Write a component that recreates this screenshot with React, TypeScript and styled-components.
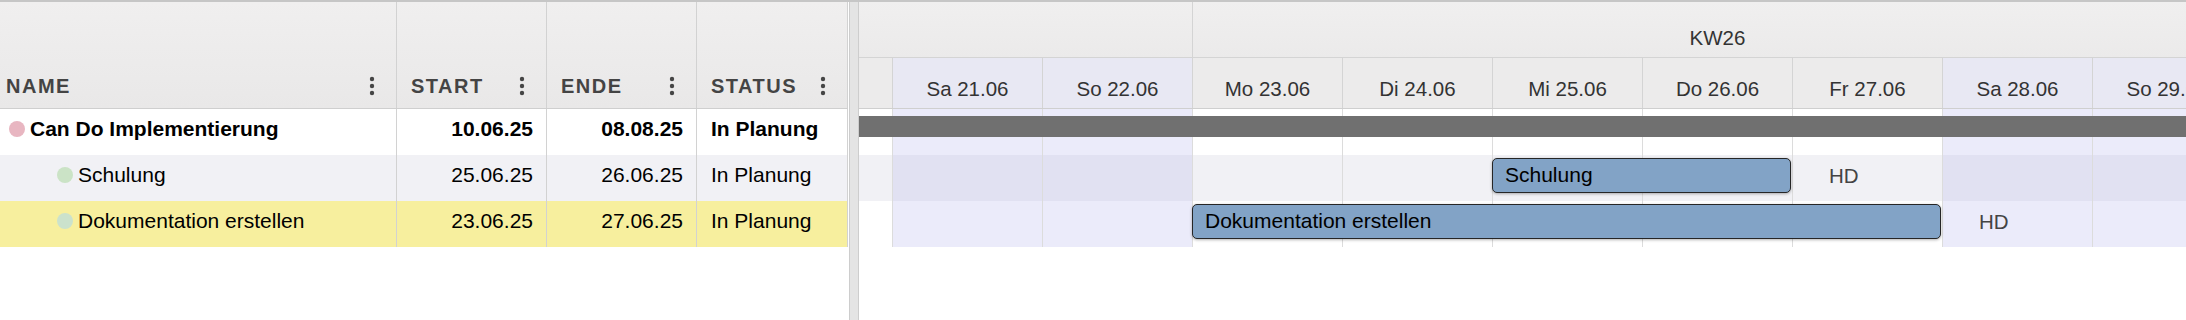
import styled, { createGlobalStyle } from "styled-components";

const DAY_WIDTH = 150;
const TIMELINE_START = new Date(2025, 5, 16);
const DAY_COUNT = 15;
const WEEKDAYS = ["So", "Mo", "Di", "Mi", "Do", "Fr", "Sa"];

type Task = {
  name: string;
  start: string;
  end: string;
  status: string;
  level: number;
  summary?: boolean;
  dot: string;
  tableBg: string;
  ganttBg: string;
};

const tasks: Task[] = [
  {
    name: "Can Do Implementierung",
    start: "10.06.25",
    end: "08.08.25",
    status: "In Planung",
    level: 0,
    summary: true,
    dot: "#e8b6c1",
    tableBg: "#ffffff",
    ganttBg: "#ffffff",
  },
  {
    name: "Schulung",
    start: "25.06.25",
    end: "26.06.25",
    status: "In Planung",
    level: 1,
    dot: "#cbe3c6",
    tableBg: "#f1f1f5",
    ganttBg: "#f1f1f5",
  },
  {
    name: "Dokumentation erstellen",
    start: "23.06.25",
    end: "27.06.25",
    status: "In Planung",
    level: 1,
    dot: "#cbe2cc",
    tableBg: "#f7ef9e",
    ganttBg: "#ffffff",
  },
];

const weeks = [
  { label: "KW25", days: 7 },
  { label: "KW26", days: 7 },
  { label: "KW27", days: 1 },
];

function toIndex(value: string) {
  const [dd, mm, yy] = value.split(".").map(Number);
  const date = new Date(2000 + yy, mm - 1, dd);
  return Math.round((date.getTime() - TIMELINE_START.getTime()) / 86400000);
}

const days = Array.from({ length: DAY_COUNT }, (_, i) => {
  const d = new Date(TIMELINE_START.getTime() + i * 86400000);
  const dd = String(d.getDate()).padStart(2, "0");
  const mm = String(d.getMonth() + 1).padStart(2, "0");
  return {
    label: `${WEEKDAYS[d.getDay()]} ${dd}.${mm}`,
    weekend: d.getDay() === 0 || d.getDay() === 6,
  };
});

const GlobalStyle = createGlobalStyle`
  body {
    margin: 0;
    background: #fff;
    font-family: "Liberation Sans", Arial, sans-serif;
    color: #111;
  }
`;

const Frame = styled.div`
  display: flex;
  height: 320px;
  border-top: 2px solid #c6c6c6;
  box-sizing: border-box;
  overflow: hidden;
`;

const TablePanel = styled.div`
  width: 848px;
  flex-shrink: 0;
  margin-right: 1px;
`;

const COLUMNS = "397px 150px 150px 151px";

const HeaderRow = styled.div`
  display: grid;
  grid-template-columns: ${COLUMNS};
  height: 107px;
  box-sizing: border-box;
  border-bottom: 1px solid #cfcfcf;
  background: linear-gradient(#f0efef, #e9e8e8);
`;

const HeaderCell = styled.div<{ $pad: number }>`
  display: flex;
  align-items: flex-end;
  justify-content: space-between;
  padding: 0 21px 10px ${(p) => p.$pad}px;
  border-right: 1px solid #d2d2d2;
  font-weight: 700;
  font-size: 20px;
  letter-spacing: 1.5px;
  color: #444;
`;

const MenuDots = styled.svg`
  width: 6px;
  height: 20px;
  margin-bottom: 2px;
  fill: #454545;
`;

const Row = styled.div<{ $bg: string; $bold: boolean }>`
  display: grid;
  grid-template-columns: ${COLUMNS};
  height: 46px;
  background: ${(p) => p.$bg};
  font-size: 21px;
  font-weight: ${(p) => (p.$bold ? 700 : 400)};
  color: #000;
`;

const Cell = styled.div<{ $align?: "left" | "right" }>`
  display: flex;
  align-items: center;
  justify-content: ${(p) => (p.$align === "right" ? "flex-end" : "flex-start")};
  padding: 0 13px 7px 14px;
  border-right: 1px solid #d2d2d2;
  white-space: nowrap;
`;

const NameCell = styled(Cell)<{ $level: number }>`
  padding-left: ${(p) => 9 + p.$level * 48}px;
  gap: 5px;
`;

const StatusDot = styled.span<{ $color: string }>`
  width: 16px;
  height: 16px;
  border-radius: 50%;
  background: ${(p) => p.$color};
  flex-shrink: 0;
`;

const Splitter = styled.div`
  width: 10px;
  flex-shrink: 0;
  box-sizing: border-box;
  background: #e4e4e4;
  border-left: 1px solid #cdcdcd;
  border-right: 1px solid #cdcdcd;
`;

const GanttPanel = styled.div`
  flex: 1;
  overflow: hidden;
`;

const Timeline = styled.div`
  width: ${DAY_COUNT * DAY_WIDTH}px;
  margin-left: -717px;
`;

const WeekTier = styled.div`
  display: flex;
  height: 56px;
  box-sizing: border-box;
  border-bottom: 1px solid #d4d4d4;
  background: linear-gradient(#f0efef, #ebeaea);
`;

const WeekCell = styled.div<{ $days: number }>`
  width: ${(p) => p.$days * DAY_WIDTH}px;
  flex-shrink: 0;
  box-sizing: border-box;
  border-left: 1px solid #d4d4d4;
  text-align: center;
  padding-top: 24px;
  font-size: 20.5px;
  color: #333;
`;

const DayTier = styled.div`
  display: flex;
  height: 51px;
  box-sizing: border-box;
  border-bottom: 1px solid #cfcfcf;
  background: #ecebeb;
`;

const DayCell = styled.div<{ $weekend: boolean }>`
  width: ${DAY_WIDTH}px;
  flex-shrink: 0;
  box-sizing: border-box;
  border-left: 1px solid #d4d4d4;
  background: ${(p) => (p.$weekend ? "#e8e8f3" : "transparent")};
  text-align: center;
  padding-top: 19px;
  font-size: 20.5px;
  color: #333;
`;

const GanttRow = styled.div<{ $bg: string }>`
  position: relative;
  display: flex;
  height: 46px;
  background: ${(p) => p.$bg};
`;

const DaySlot = styled.div<{ $weekend: boolean }>`
  width: ${DAY_WIDTH}px;
  flex-shrink: 0;
  box-sizing: border-box;
  border-left: 1px solid #dcdcdc;
  background: ${(p) => (p.$weekend ? "rgba(180, 180, 235, 0.27)" : "transparent")};
`;

const SummaryBar = styled.div`
  position: absolute;
  top: 7px;
  height: 21px;
  background: #707070;
`;

const TaskBar = styled.div`
  position: absolute;
  top: 3px;
  height: 35px;
  box-sizing: border-box;
  display: flex;
  align-items: center;
  padding: 0 0 1px 12px;
  border: 1px solid #262626;
  border-radius: 5px;
  background: #82a3c6;
  box-shadow: 0 1px 3px rgba(0, 0, 0, 0.3);
  font-size: 21px;
  color: #000;
  white-space: nowrap;
`;

const BarLabel = styled.span`
  position: absolute;
  top: 0;
  height: 46px;
  display: flex;
  align-items: center;
  padding-bottom: 4px;
  box-sizing: border-box;
  font-size: 20.5px;
  color: #444;
`;

function Dots() {
  return (
    <MenuDots viewBox="0 0 6 20">
      <circle cx="3" cy="3" r="2.2" />
      <circle cx="3" cy="10" r="2.2" />
      <circle cx="3" cy="17" r="2.2" />
    </MenuDots>
  );
}

function GanttLine({ task }: { task: Task }) {
  const from = toIndex(task.start);
  const to = toIndex(task.end);
  const left = from * DAY_WIDTH;
  const width = (to - from + 1) * DAY_WIDTH - 1;
  return (
    <GanttRow $bg={task.ganttBg}>
      {days.map((d, i) => (
        <DaySlot key={i} $weekend={d.weekend} />
      ))}
      {task.summary ? (
        <SummaryBar style={{ left, width }} />
      ) : (
        <>
          <TaskBar style={{ left, width }}>{task.name}</TaskBar>
          <BarLabel style={{ left: (to + 1) * DAY_WIDTH + 37 }}>HD</BarLabel>
        </>
      )}
    </GanttRow>
  );
}

export default function App() {
  return (
    <>
      <GlobalStyle />
      <Frame>
        <TablePanel>
          <HeaderRow>
            <HeaderCell $pad={6}>
              NAME
              <Dots />
            </HeaderCell>
            <HeaderCell $pad={14}>
              START
              <Dots />
            </HeaderCell>
            <HeaderCell $pad={14}>
              ENDE
              <Dots />
            </HeaderCell>
            <HeaderCell $pad={14}>
              STATUS
              <Dots />
            </HeaderCell>
          </HeaderRow>
          {tasks.map((t) => (
            <Row key={t.name} $bg={t.tableBg} $bold={!!t.summary}>
              <NameCell $level={t.level}>
                <StatusDot $color={t.dot} />
                {t.name}
              </NameCell>
              <Cell $align="right">{t.start}</Cell>
              <Cell $align="right">{t.end}</Cell>
              <Cell>{t.status}</Cell>
            </Row>
          ))}
        </TablePanel>
        <Splitter />
        <GanttPanel>
          <Timeline>
            <WeekTier>
              {weeks.map((w) => (
                <WeekCell key={w.label} $days={w.days}>
                  {w.label}
                </WeekCell>
              ))}
            </WeekTier>
            <DayTier>
              {days.map((d) => (
                <DayCell key={d.label} $weekend={d.weekend}>
                  {d.label}
                </DayCell>
              ))}
            </DayTier>
            {tasks.map((t) => (
              <GanttLine key={t.name} task={t} />
            ))}
          </Timeline>
        </GanttPanel>
      </Frame>
    </>
  );
}
